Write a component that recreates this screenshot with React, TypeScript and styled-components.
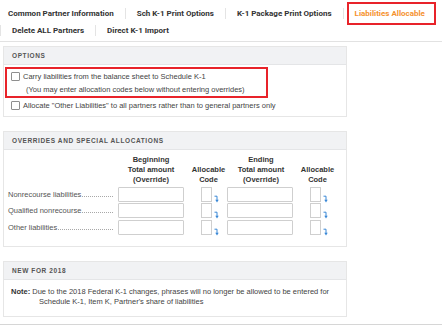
import React from "react";
import styled, { createGlobalStyle } from "styled-components";

const Global = createGlobalStyle`
  html, body { margin: 0; padding: 0; background: #fff; }
  body { font-family: "Liberation Sans", Arial, sans-serif; color: #444; width: 442px; height: 325px; overflow: hidden; }
`;

const Page = styled.div`
  width: 442px;
  height: 325px;
  display: flex;
  flex-direction: column;
  border-bottom: 1px solid #d6d6d6;
  box-sizing: border-box;
`;

const TabBar = styled.div`
  display: flex;
  flex-wrap: wrap;
  padding: 5px 0 2px 0;
  border-bottom: 1px solid #e2e2e2;
  width: 442px;
  box-sizing: border-box;
`;

const Tab = styled.div<{ $first?: boolean; $active?: boolean }>`
  position: relative;
  margin: 3px 0;
  height: 11px;
  line-height: 11px;
  padding: 0 11px 0 ${(p) => (p.$first ? 8 : 11)}px;
  border-left: ${(p) => (p.$first ? "none" : "1px solid #e4e4e4")};
  font-family: Roboto, "Open Sans", sans-serif;
  font-weight: 700;
  font-size: 8px;
  color: ${(p) => (p.$active ? "#f5922f" : "#333")};
  white-space: nowrap;
  &::after {
    content: "";
    display: ${(p) => (p.$active ? "block" : "none")};
    position: absolute;
    left: 3px;
    right: 0px;
    top: -6px;
    bottom: -6px;
    border: 2px solid #e8232a;
  }
`;

const Content = styled.div`
  display: flex;
  flex-direction: column;
  gap: 14px;
  padding: 4px 0 0 3px;
`;

const Panel = styled.section`
  width: 344px;
  border: 1px solid #e6e6e6;
  box-sizing: border-box;
`;

const PanelHeader = styled.div`
  height: 17px;
  line-height: 17px;
  background: #f1f2f4;
  border-bottom: 1px solid #e4e5e7;
  padding-left: 8px;
  font-weight: 700;
  font-size: 6.5px;
  letter-spacing: 0.6px;
  color: #555;
`;

const OptionsBody = styled.div`
  padding: 2px 2px 4px 1px;
  font-size: 7.5px;
  color: #444;
`;

const Highlight = styled.div`
  width: 263px;
  box-sizing: border-box;
  border: 2px solid #e8232a;
  padding: 1px 0 0 4px;
`;

const Line = styled.div<{ $indent?: number }>`
  display: flex;
  align-items: center;
  gap: 3px;
  height: 13px;
  padding-left: ${(p) => p.$indent ?? 0}px;
  white-space: nowrap;
`;

const PlainLine = styled(Line)`
  padding-left: 6px;
  margin-top: 1px;
`;

const Check = styled.span`
  width: 7px;
  height: 7px;
  border: 1px solid #8f8f8f;
  border-radius: 1px;
  background: #fff;
  flex: none;
`;

const Grid = styled.div`
  display: grid;
  grid-template-columns: 110px 66px 43px 66px 43px;
  padding: 5px 0 11px 4px;
  row-gap: 1.5px;
`;

const ColHead = styled.div<{ $shift?: number }>`
  font-weight: 700;
  font-size: 7.5px;
  line-height: 10px;
  color: #333;
  text-align: center;
  padding-left: ${(p) => p.$shift ?? 0}px;
  align-self: end;
`;

const RowLabel = styled.div`
  display: flex;
  align-items: baseline;
  font-size: 7.5px;
  color: #555;
  white-space: nowrap;
  width: 106px;
  align-self: center;
`;

const Leader = styled.span`
  flex: 1;
  height: 1px;
  margin-left: 1px;
  background: linear-gradient(to right, #a8a8a8 50%, transparent 50%) left bottom / 2px 1px repeat-x;
`;

const TextBox = styled.div`
  height: 15px;
  border: 1px solid #cfcfcf;
  border-radius: 1px;
  box-sizing: border-box;
  background: #fff;
`;

const CodeCell = styled.div`
  display: flex;
  align-items: flex-end;
  gap: 2px;
  padding-left: 17px;
`;

const CodeBox = styled.div`
  width: 11px;
  height: 15px;
  border: 1px solid #cfcfcf;
  box-sizing: border-box;
  background: #fff;
`;

const NoteBody = styled.div`
  padding: 7px 0 9px 7px;
  font-size: 7.5px;
  color: #444;
  line-height: 10px;
`;

const NoteLabel = styled.b`
  color: #333;
`;

const NoteCont = styled.div`
  padding-left: 28px;
`;

const Arrow = () => (
  <svg width="5" height="8" viewBox="0 0 5 8" style={{ marginBottom: -1 }}>
    <path d="M0.5 1.2 H3 V5.5" fill="none" stroke="#3a88d6" strokeWidth="1" />
    <polygon points="1.3,4.8 4.7,4.8 3,7.6" fill="#3a88d6" />
  </svg>
);

const rows = ["Nonrecourse liabilities", "Qualified nonrecourse", "Other liabilities"];

export default function App() {
  return (
    <Page>
      <Global />
      <TabBar>
        <Tab $first>Common Partner Information</Tab>
        <Tab>Sch K-1 Print Options</Tab>
        <Tab>K-1 Package Print Options</Tab>
        <Tab $active>Liabilities Allocable</Tab>
        <Tab>Delete ALL Partners</Tab>
        <Tab>Direct K-1 Import</Tab>
      </TabBar>
      <Content>
        <Panel>
          <PanelHeader>OPTIONS</PanelHeader>
          <OptionsBody>
            <Highlight>
              <Line>
                <Check />
                Carry liabilities from the balance sheet to Schedule K-1
              </Line>
              <Line $indent={15}>(You may enter allocation codes below without entering overrides)</Line>
            </Highlight>
            <PlainLine>
              <Check />
              Allocate "Other Liabilities" to all partners rather than to general partners only
            </PlainLine>
          </OptionsBody>
        </Panel>
        <Panel>
          <PanelHeader>OVERRIDES AND SPECIAL ALLOCATIONS</PanelHeader>
          <Grid>
            <div />
            <ColHead>
              Beginning
              <br />
              Total amount
              <br />
              (Override)
            </ColHead>
            <ColHead $shift={6}>
              Allocable
              <br />
              Code
            </ColHead>
            <ColHead $shift={2}>
              Ending
              <br />
              Total amount
              <br />
              (Override)
            </ColHead>
            <ColHead $shift={6}>
              Allocable
              <br />
              Code
            </ColHead>
            {rows.map((r) => (
              <React.Fragment key={r}>
                <RowLabel>
                  {r}
                  <Leader />
                </RowLabel>
                <TextBox />
                <CodeCell>
                  <CodeBox />
                  <Arrow />
                </CodeCell>
                <TextBox />
                <CodeCell>
                  <CodeBox />
                  <Arrow />
                </CodeCell>
              </React.Fragment>
            ))}
          </Grid>
        </Panel>
        <Panel>
          <PanelHeader>NEW FOR 2018</PanelHeader>
          <NoteBody>
            <div>
              <NoteLabel>Note:</NoteLabel> Due to the 2018 Federal K-1 changes, phrases will no longer be allowed to be entered for
            </div>
            <NoteCont>Schedule K-1, Item K, Partner's share of liabilities</NoteCont>
          </NoteBody>
        </Panel>
      </Content>
    </Page>
  );
}
